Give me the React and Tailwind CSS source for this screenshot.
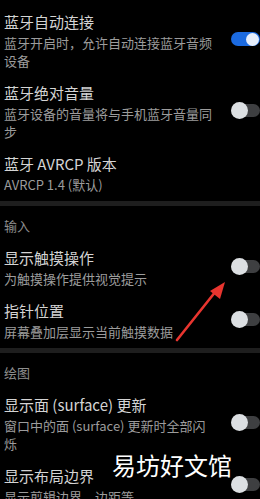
import React from 'react';

const items = [
  { type: 'item', title: '蓝牙自动连接', sub: '蓝牙开启时，允许自动连接蓝牙音频设备', on: true },
  { type: 'item', title: '蓝牙绝对音量', sub: '蓝牙设备的音量将与手机蓝牙音量同步', on: false },
  { type: 'item', title: '蓝牙 AVRCP 版本', sub: 'AVRCP 1.4 (默认)' },
  { type: 'divider' },
  { type: 'header', title: '输入' },
  { type: 'item', title: '显示触摸操作', sub: '为触摸操作提供视觉提示', on: false },
  { type: 'item', title: '指针位置', sub: '屏幕叠加层显示当前触摸数据', on: false },
  { type: 'divider' },
  { type: 'header', title: '绘图' },
  { type: 'item', title: '显示面 (surface) 更新', sub: '窗口中的面 (surface) 更新时全部闪烁', on: false },
  { type: 'item', title: '显示布局边界', sub: '显示剪辑边界、边距等', on: false },
];

const Toggle = ({ on }) => {
  if (on) {
    return (
      <div className="flex items-center justify-end w-[29px] h-[14px] mb-[4px] pr-[1px] rounded-full bg-[#1b6ae0] shrink-0">
        <div className="w-[13px] h-[13px] rounded-full bg-[#e6eefc]" />
      </div>
    );
  }
  return (
    <div className="flex items-center w-[29px] h-[17px] mb-[4px] shrink-0">
      <div className="w-[17px] h-[17px] rounded-full bg-[#dcdfe2] z-10 shrink-0" />
      <div className="flex-1 h-[13px] -ml-[13px] rounded-r-full bg-[#3e3f41]" />
    </div>
  );
};

const Row = ({ title, sub, on }) => (
  <div className="flex items-center pl-[4px] pt-[6px] pb-[7px]">
    <div className="w-[214px]">
      <div className="text-[15px] leading-[20px] text-[#d4d4d4]">{title}</div>
      <div className="mt-[2px] text-[13px] leading-[18px] text-[#9c9c9c]">{sub}</div>
    </div>
    <div className="flex-1" />
    {on !== undefined && <Toggle on={on} />}
  </div>
);

export default function App() {
  return (
    <div
      className="relative w-[260px] h-[499px] overflow-hidden bg-black pt-[6px]"
      style={{ fontFamily: '"Noto Sans CJK SC", "Noto Sans", sans-serif' }}
    >
      {items.map((it, i) => {
        if (it.type === 'divider') return <div key={i} className="h-[5px] bg-[#1e1e1e]" />;
        if (it.type === 'header')
          return (
            <div key={i} className="pl-[4px] pt-[10px] pb-[6px] text-[13px] leading-[20px] text-[#8e8e8e]">
              {it.title}
            </div>
          );
        return <Row key={i} {...it} />;
      })}

      {/* red arrow annotation */}
      <svg className="absolute left-0 top-0" width="260" height="499" viewBox="0 0 260 499">
        <line x1="177" y1="340" x2="216" y2="291" stroke="#e8352f" strokeWidth="2.6" strokeLinecap="round" />
        <polygon points="225,282 210,291 220,299" fill="#e8352f" />
      </svg>

      {/* watermark */}
      <div
        className="absolute left-[112px] top-[452px] text-[24px] leading-[26px] text-white"
        style={{ textShadow: '0 0 3px #000, 0 0 2px #000' }}
      >
        易坊好文馆
      </div>
    </div>
  );
}
